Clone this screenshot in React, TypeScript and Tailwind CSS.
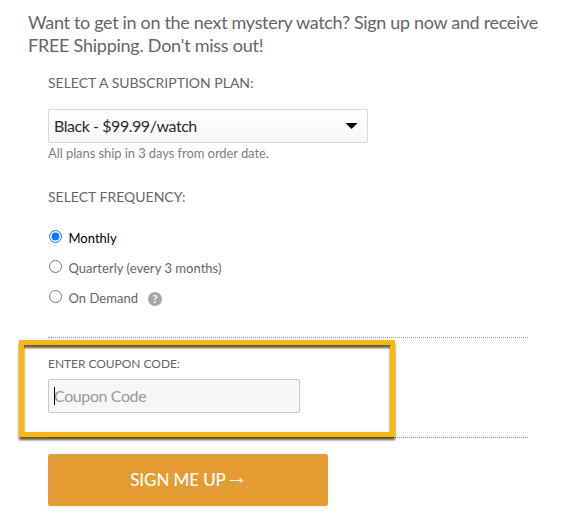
import { useState } from 'react';

const frequencies = ['Monthly', 'Quarterly (every 3 months)', 'On Demand'];

export default function App() {
    const [frequency, setFrequency] = useState('Monthly');
    const [coupon, setCoupon] = useState('');

    return (
        <div className="relative h-[518px] w-[572px] overflow-hidden bg-white pl-7 font-['Lato',sans-serif] text-[#666]">
            <p className="pt-[11px] text-[18px] leading-[23px] tracking-[-0.325px]">
                Want to get in on the next mystery watch? Sign up now and receive
                <br />
                <span className="tracking-[-0.25px]">FREE Shipping. Don't miss out!</span>
            </p>

            <div className="ml-5 w-[480px]">
                {/* Plan */}
                <h2 className="mt-4 text-[14px] leading-5">SELECT A SUBSCRIPTION PLAN:</h2>
                <button className="mt-4 flex h-[34px] w-[320px] items-center justify-between rounded-[1px] border border-[#d9d9d9] bg-gradient-to-b from-white to-[#f7f7f7] pr-[9px] pl-[5px] text-[16px] tracking-[-0.45px] text-[#2b2b2b]">
                    Black - $99.99/watch
                    <svg width="13" height="6" viewBox="0 0 13 6">
                        <path d="M0.5 0h12L7 5.6q-.5.4-1 0z" fill="#000" />
                    </svg>
                </button>
                <p className="text-[13px] leading-5 tracking-[-0.08px] text-[#808080]">All plans ship in 3 days from order date.</p>

                {/* Frequency */}
                <h2 className="mt-6 text-[14px] leading-5">SELECT FREQUENCY:</h2>
                <div className="mt-[17px] flex flex-col">
                    {frequencies.map((name) => (
                        <label key={name} className="flex h-[30px] items-center text-[13px]">
                            <input
                                type="radio"
                                name="frequency"
                                checked={frequency === name}
                                onChange={() => setFrequency(name)}
                                className="mr-[6.5px] mb-[5px] ml-[1px] size-[13px] accent-[#0a7aff]"
                            />
                            <span className={frequency === name ? 'text-black' : 'tracking-[0.03px]'}>{name}</span>
                            {name === 'On Demand' && (
                                <span className="ml-[10px] flex size-[14px] items-center justify-center rounded-full bg-[#a5a5a5] text-[11px] font-bold text-white">
                                    ?
                                </span>
                            )}
                        </label>
                    ))}
                </div>

                {/* Coupon */}
                <div className="mt-[23px] h-[101px] border-y border-dotted border-[#999] pt-[17px]">
                    <h2 className="text-[12px] leading-[18px] tracking-[-0.04px]">ENTER COUPON CODE:</h2>
                    <div className="relative mt-[6px] h-[34px] w-[252px]">
                        <input
                            value={coupon}
                            onChange={(e) => setCoupon(e.target.value)}
                            placeholder="Coupon Code"
                            className="h-full w-full rounded-[2px] border border-[#c8c8c8] bg-[#f6f6f6] px-[5px] pb-[2px] text-[16px] tracking-[-0.4px] text-[#222] outline-none placeholder:text-[#999]"
                        />
                        <span className="absolute top-2 left-[6px] h-[18px] w-px bg-black"></span>
                    </div>
                </div>

                <button className="mt-4 flex h-[52px] w-[280px] items-center justify-center gap-[2px] rounded-[2px] bg-[#e49b31] pb-[1px] text-[17px] font-medium tracking-[-0.1px] text-white">
                    SIGN ME UP
                    <span className="-mx-[2px] pb-[6px] font-['Liberation_Sans',sans-serif] text-[22px] leading-none font-bold tracking-normal">→</span>
                </button>
            </div>

            {/* Highlight frame */}
            <div className="pointer-events-none absolute top-[340px] left-[19px] h-[97px] w-[376px] border-[5px] border-[#fdb900] drop-shadow-[0_3px_1px_rgba(0,0,0,0.65)]"></div>
        </div>
    );
}
